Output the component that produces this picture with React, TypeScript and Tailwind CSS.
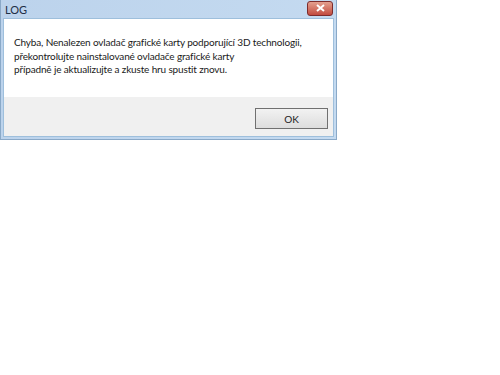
export default function App() {
  return (
    <div className="w-[500px] h-[375px] bg-white" style={{ fontFamily: 'Lato, "Noto Sans", sans-serif' }}>
      <div className="w-[337px] flex flex-col bg-gradient-to-r from-[#bcd3ec] to-[#c4daf0] border border-[#8aa9c8] border-t-0">
        {/* title bar */}
        <div className="h-[18px] flex items-center justify-between pl-[4px] pr-[3px]">
          <span className="text-[11px] leading-none text-[#1e2f46]">LOG</span>
          <button className="w-[26px] h-[15px] -mt-[2px] rounded-[3px] border border-[#7d2c2c] bg-gradient-to-b from-[#e3a08f] to-[#c24a3f] flex items-center justify-center">
            <svg width="9" height="8" viewBox="0 0 9 8">
              <path d="M1 1 L8 7 M8 1 L1 7" stroke="white" strokeWidth="2" />
            </svg>
          </button>
        </div>
        {/* client */}
        <div className="mx-[2px] mb-[2px] border border-[#9ebfdc] bg-white flex flex-col">
          <div className="h-[78px] pt-[17px] pl-[10px] text-[10px] leading-[13.5px] tracking-[-0.15px] text-[#1a1a1a] whitespace-nowrap">
            <p>Chyba, Nenalezen ovladač grafické karty podporující 3D technologii,</p>
            <p>překontrolujte nainstalované ovladače grafické karty</p>
            <p>případně je aktualizujte a zkuste hru spustit znovu.</p>
          </div>
          <div className="h-[39px] bg-[#f0f0f0] flex justify-end items-start pt-[11px] pr-[5px]">
            <button className="w-[73px] h-[21px] border border-[#707070] bg-gradient-to-b from-[#f2f2f2] to-[#dddddd] text-[10px] leading-none text-[#1a1a1a]">
              OK
            </button>
          </div>
        </div>
      </div>
    </div>
  );
}
